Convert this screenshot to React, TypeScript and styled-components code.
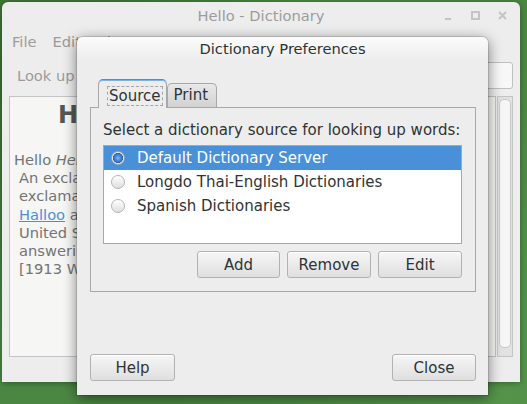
import React from "react";
import styled, { createGlobalStyle } from "styled-components";

const GlobalStyle = createGlobalStyle`
  html, body {
    margin: 0;
    padding: 0;
    width: 527px;
    height: 404px;
    overflow: hidden;
  }
  body {
    font-family: "DejaVu Sans", "Liberation Sans", sans-serif;
    font-size: 14.67px;
  }
`;

const Desktop = styled.div`
  position: relative;
  width: 527px;
  height: 404px;
  overflow: hidden;
  background:
    radial-gradient(circle at 10% 20%, rgba(20, 60, 20, 0.35), transparent 45%),
    radial-gradient(circle at 90% 90%, rgba(120, 190, 100, 0.25), transparent 50%),
    #4b8743;
`;

/* ---------- main (inactive) window ---------- */

const MainWindow = styled.div`
  position: absolute;
  left: 2px;
  top: 2px;
  width: 518px;
  height: 380px;
  background: #ededed;
  border-radius: 6px 6px 0 0;
  box-shadow: 0 1px 6px rgba(0, 0, 0, 0.35);
  display: flex;
  flex-direction: column;
  color: #9c9c9c;
`;

const TitleBar = styled.div`
  height: 26px;
  display: flex;
  align-items: center;
  justify-content: center;
  position: relative;
`;

const WindowControls = styled.div`
  position: absolute;
  right: 13px;
  top: 9px;
  display: flex;
  gap: 18px;
  align-items: flex-end;
`;

const MenuBar = styled.div`
  height: 27px;
  display: flex;
  align-items: center;
  padding-left: 2px;
`;

const MenuItem = styled.span`
  padding: 0 8px;
`;

const LookupRow = styled.div`
  height: 41px;
  display: flex;
  align-items: center;
  padding: 0 7px 0 15px;
  gap: 14px;
`;

const Entry = styled.div`
  flex: 1;
  height: 25px;
  background: #f7f7f7;
  border: 1px solid #c0c0c0;
  border-radius: 3px;
`;

const ContentRow = styled.div`
  height: 261px;
  margin: 0 7px;
  display: flex;
  gap: 1px;
`;

const Viewer = styled.div`
  flex: 1;
  background: #f6f6f4;
  border: 1px solid #c4c4c4;
  padding: 4px;
  overflow: hidden;
`;

const Heading = styled.div`
  font-size: 24px;
  font-weight: bold;
  color: #555753;
  margin: 2px 0 24px 44px;
  line-height: 24px;
`;

const BodyLine = styled.div<{ $indent?: boolean }>`
  white-space: nowrap;
  line-height: 18.2px;
  color: #747474;
  padding-left: ${(p) => (p.$indent ? "5px" : "0")};
`;

const Link = styled.span`
  color: #4a90d9;
  text-decoration: underline;
`;

const Scrollbar = styled.div`
  width: 12px;
  background: #e2e2e2;
  border: 1px solid #c4c4c4;
  padding: 2px 1px;
  display: flex;
`;

const Thumb = styled.div`
  flex: 1;
  margin-bottom: 6px;
  background: #f6f6f6;
  border: 1px solid #c8c8c8;
  border-radius: 5px;
`;

/* ---------- dialog ---------- */

const Dialog = styled.div`
  position: absolute;
  left: 77px;
  top: 37px;
  width: 411px;
  height: 358px;
  background: #ededed;
  border-radius: 6px 6px 0 0;
  box-shadow: 0 3px 14px rgba(0, 0, 0, 0.5), 0 0 0 1px rgba(0, 0, 0, 0.12);
  display: flex;
  flex-direction: column;
  color: #2e3436;
`;

const DialogTitle = styled.div`
  height: 23px;
  display: flex;
  align-items: center;
  justify-content: center;
  border-radius: 6px 6px 0 0;
  background: linear-gradient(#fbfbfb, #ededed);
`;

const DialogBody = styled.div`
  flex: 1;
  display: flex;
  flex-direction: column;
  padding: 19px 12px 14px 13px;
  font-size: 15px;
`;

const TabStrip = styled.div`
  height: 28px;
  display: flex;
  align-items: flex-end;
  padding-left: 8px;
  position: relative;
  z-index: 1;
`;

const Tab = styled.div<{ $active?: boolean }>`
  box-sizing: border-box;
  height: ${(p) => (p.$active ? "29px" : "24px")};
  margin-bottom: ${(p) => (p.$active ? "-1px" : "0")};
  padding: ${(p) => (p.$active ? "6px 3px 0 8px" : "2px 8px 0 6px")};
  border: 1px solid #a8a8a8;
  border-bottom: none;
  border-radius: 5px 5px 0 0;
  background: ${(p) =>
    p.$active ? "#ededed" : "linear-gradient(#e8e8e8, #d2d2d2)"};
  border-top-color: ${(p) => (p.$active ? "#4a90d9" : "#a8a8a8")};
  box-shadow: ${(p) => (p.$active ? "inset 0 1px 0 #7fb1e6" : "none")};
  line-height: 18px;
`;

const FocusLabel = styled.span`
  display: inline-block;
  border: 1px dashed #a6a6a6;
  padding: 0 1px;
  line-height: 18px;
`;

const TabPanel = styled.div`
  height: 185px;
  box-sizing: border-box;
  border: 1px solid #a8a8a8;
  padding: 14px 13px 13px 12px;
  display: flex;
  flex-direction: column;
`;

const PanelLabel = styled.div`
  line-height: 16px;
  white-space: nowrap;
`;

const SourceList = styled.div`
  margin-top: 7px;
  height: 99px;
  box-sizing: border-box;
  background: #ffffff;
  border: 1px solid #a8a8a8;
`;

const SourceRow = styled.div<{ $selected?: boolean }>`
  height: 24px;
  display: flex;
  align-items: center;
  gap: 12px;
  padding-left: 7px;
  background: ${(p) => (p.$selected ? "#4a90d9" : "transparent")};
  color: ${(p) => (p.$selected ? "#ffffff" : "#2e3436")};
  white-space: nowrap;
`;

const Radio = styled.span<{ $checked?: boolean }>`
  box-sizing: border-box;
  width: 14px;
  height: 14px;
  border-radius: 50%;
  border: 1px solid ${(p) => (p.$checked ? "#9aa6b4" : "#b4b4b4")};
  background: ${(p) =>
    p.$checked
      ? "radial-gradient(circle at 50% 50%, #8cbcf0 0, #4a8ad8 2.5px, #3c78c4 4px, #2f5f9e 4.8px, #eef0f2 5.4px, #d4d6d8 100%)"
      : "linear-gradient(#ffffff, #dedede)"};
  flex: none;
`;

const ActionRow = styled.div<{ $spread?: boolean }>`
  display: flex;
  justify-content: ${(p) => (p.$spread ? "space-between" : "flex-end")};
  gap: 7px;
`;

const ListActions = styled(ActionRow)`
  margin-top: 7px;
`;

const Button = styled.button<{ $w: number }>`
  width: ${(p) => p.$w}px;
  height: 27px;
  font-family: inherit;
  font-size: 15px;
  color: #2e3436;
  background: linear-gradient(#f6f6f6, #dfdfdf);
  border: 1px solid #b2b2b2;
  border-radius: 3px;
  padding: 0;
  box-shadow: inset 0 1px 0 #ffffff;
`;

const Spacer = styled.div`
  flex: 1;
`;

const ControlIcon = ({ kind }: { kind: "min" | "max" | "close" }) => (
  <svg width="9" height="9" viewBox="0 0 9 9">
    {kind === "min" && <rect x="1" y="7" width="6" height="2" fill="#c4c4c4" />}
    {kind === "max" && (
      <rect x="1" y="1" width="7" height="7" fill="none" stroke="#c4c4c4" strokeWidth="2" />
    )}
    {kind === "close" && (
      <path d="M1 1 L8 8 M8 1 L1 8" stroke="#c4c4c4" strokeWidth="2" />
    )}
  </svg>
);

const sources = [
  "Default Dictionary Server",
  "Longdo Thai-English Dictionaries",
  "Spanish Dictionaries",
];

export default function App() {
  return (
    <>
      <GlobalStyle />
      <Desktop>
        <MainWindow>
          <TitleBar>
            Hello - Dictionary
            <WindowControls>
              <ControlIcon kind="min" />
              <ControlIcon kind="max" />
              <ControlIcon kind="close" />
            </WindowControls>
          </TitleBar>
          <MenuBar>
            <MenuItem>File</MenuItem>
            <MenuItem>Edit</MenuItem>
            <MenuItem>View</MenuItem>
            <MenuItem>Go</MenuItem>
          </MenuBar>
          <LookupRow>
            <span>Look up</span>
            <Entry />
          </LookupRow>
          <ContentRow>
            <Viewer>
              <Heading>Hello</Heading>
              <BodyLine>
                Hello <i>Hello</i>
              </BodyLine>
              <BodyLine $indent>An exclamation</BodyLine>
              <BodyLine $indent>exclamation</BodyLine>
              <BodyLine $indent>
                <Link>Halloo</Link> and
              </BodyLine>
              <BodyLine $indent>United States</BodyLine>
              <BodyLine $indent>answering</BodyLine>
              <BodyLine $indent>[1913 Webster]</BodyLine>
            </Viewer>
            <Scrollbar>
              <Thumb />
            </Scrollbar>
          </ContentRow>
        </MainWindow>

        <Dialog>
          <DialogTitle>Dictionary Preferences</DialogTitle>
          <DialogBody>
            <TabStrip>
              <Tab $active>
                <FocusLabel>Source</FocusLabel>
              </Tab>
              <Tab>Print</Tab>
            </TabStrip>
            <TabPanel>
              <PanelLabel>Select a dictionary source for looking up words:</PanelLabel>
              <SourceList>
                {sources.map((s, i) => (
                  <SourceRow key={s} $selected={i === 0}>
                    <Radio $checked={i === 0} />
                    {s}
                  </SourceRow>
                ))}
              </SourceList>
              <ListActions>
                <Button $w={83}>Add</Button>
                <Button $w={84}>Remove</Button>
                <Button $w={84}>Edit</Button>
              </ListActions>
            </TabPanel>
            <Spacer />
            <ActionRow $spread>
              <Button $w={85}>Help</Button>
              <Button $w={84}>Close</Button>
            </ActionRow>
          </DialogBody>
        </Dialog>
      </Desktop>
    </>
  );
}
